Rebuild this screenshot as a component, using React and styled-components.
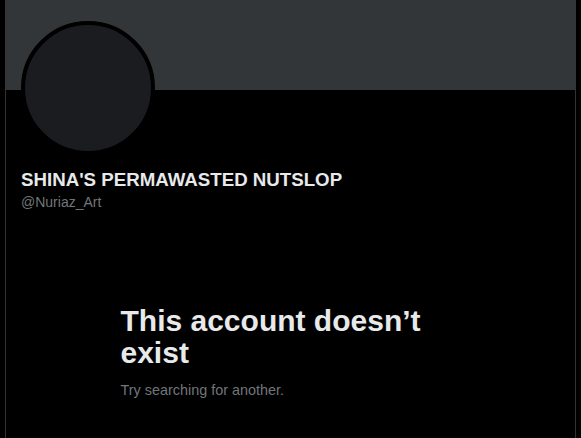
import styled, { createGlobalStyle } from "styled-components";

const GlobalStyle = createGlobalStyle`
  html, body {
    margin: 0;
    padding: 0;
    background: #000;
  }
  body {
    font-family: "Liberation Sans", Arial, sans-serif;
    height: 438px;
    overflow: hidden;
  }
`;

export default function App() {
  return (
    <>
      <GlobalStyle />
      <Page>
        <Column>
          <Banner />
          <ProfileSection>
            <Avatar />
            <DisplayName>SHINA'S PERMAWASTED NUTSLOP</DisplayName>
            <Handle>@Nuriaz_Art</Handle>
          </ProfileSection>
          <EmptyState>
            <EmptyTitle>This account doesn’t exist</EmptyTitle>
            <EmptyText>Try searching for another.</EmptyText>
          </EmptyState>
        </Column>
      </Page>
    </>
  );
}

const Page = styled.div`
  width: 100%;
  height: 438px;
  background: #000;
  display: flex;
`;

const Column = styled.main`
  width: 571px;
  height: 100%;
  margin-left: 5px;
  box-sizing: border-box;
  border-left: 1px solid #2f3336;
  border-right: 1px solid #2f3336;
  display: flex;
  flex-direction: column;
`;

const Banner = styled.div`
  height: 90px;
  background: #333639;
  margin: 0 -1px;
  flex-shrink: 0;
`;

const ProfileSection = styled.section`
  padding: 0 15px;
  display: flex;
  flex-direction: column;
  align-items: flex-start;
`;

const Avatar = styled.div`
  width: 134px;
  height: 134px;
  box-sizing: border-box;
  margin-top: -69px;
  border-radius: 50%;
  border: 4px solid #000;
  background: #1a1c1f;
`;

const DisplayName = styled.h2`
  margin: 14px 0 0;
  font-size: 18.7px;
  line-height: 22px;
  font-weight: 700;
  color: #e7e9ea;
`;

const Handle = styled.div`
  margin-top: 2px;
  font-size: 14px;
  line-height: 18px;
  color: #71767b;
`;

const EmptyState = styled.div`
  width: 340px;
  margin: 94px auto 0;
  display: flex;
  flex-direction: column;
`;

const EmptyTitle = styled.h1`
  margin: 0;
  font-size: 30px;
  line-height: 32px;
  font-weight: 700;
  color: #e7e9ea;
`;

const EmptyText = styled.p`
  margin: 12px 0 0;
  font-size: 14.4px;
  line-height: 18px;
  color: #71767b;
`;
